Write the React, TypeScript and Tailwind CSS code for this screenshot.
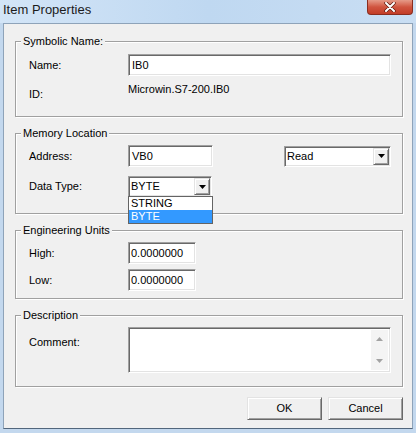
import React from 'react';

// classic win32 bevels
const sunken =
  'bg-white border border-[#a0a0a0] border-b-white border-r-white shadow-[inset_1px_1px_0_#696969,inset_-1px_-1px_0_#e3e3e3]';
const raised =
  'bg-[#f0f0f0] border border-[#e3e3e3] border-b-[#696969] border-r-[#696969] shadow-[inset_1px_1px_0_#ffffff,inset_-1px_-1px_0_#a0a0a0]';

function DownArrow({ color = '#000' }: { color?: string }) {
  return (
    <svg width="7" height="4" viewBox="0 0 7 4">
      <path d="M0 0h7L3.5 4z" fill={color} />
    </svg>
  );
}

function UpArrow({ color = '#000' }: { color?: string }) {
  return (
    <svg width="7" height="4" viewBox="0 0 7 4">
      <path d="M0 4h7L3.5 0z" fill={color} />
    </svg>
  );
}

function Combo({ value, width }: { value: string; width: string }) {
  return (
    <div className={`${sunken} ${width} h-[21px] flex items-center pl-[2px] pr-[1px]`}>
      <span className="flex-1 leading-[13px]">{value}</span>
      <div className={`${raised} w-[16px] h-[17px] flex items-center justify-center`}>
        <DownArrow />
      </div>
    </div>
  );
}

function GroupBox({
  title,
  height,
  className = '',
  children,
}: {
  title: string;
  height: string;
  className?: string;
  children: React.ReactNode;
}) {
  return (
    <fieldset
      className={`${height} ${className} border border-[#a0a0a0] shadow-[inset_1px_1px_0_#ffffff,1px_1px_0_#ffffff] pl-[13px]`}
    >
      <legend className="-ml-[8px] px-[2px] bg-[#f0f0f0] leading-[13px]">{title}</legend>
      {children}
    </fieldset>
  );
}

export default function App() {
  return (
    <div className="w-[416px] h-[433px] bg-[#c3d8ee] flex flex-col overflow-hidden text-[11px] text-black font-['Liberation_Sans',Arial,sans-serif]">
      {/* Title bar */}
      <div className="h-[23px] flex items-start justify-between pl-[3px] pr-[3px] bg-linear-to-r from-[#d3e5f7] via-[#bfd8f1] to-[#c9def3]">
        <span className="mt-[2px] text-[13px] leading-[16px] text-[#1b1b1b]">Item Properties</span>
        <div className="w-[46px] h-[15px] rounded-b-[4px] border border-t-0 border-[#8a2d1f] bg-linear-to-b from-[#e59a88] via-[#d0543f] to-[#c23d27] flex items-center justify-center">
          <svg width="12" height="10" viewBox="0 0 12 10">
            <path d="M2 1l8 8M10 1l-8 8" stroke="#5a1a10" strokeWidth="3.4" strokeLinecap="round" />
            <path d="M2 1l8 8M10 1l-8 8" stroke="#ffffff" strokeWidth="2" strokeLinecap="round" />
          </svg>
        </div>
      </div>

      {/* Client area */}
      <div className="mx-[3px] h-[406px] border border-[#8ea3b9] border-b-[#52667c] bg-[#f0f0f0] pt-[11px] pl-[11px] pr-[9px] flex flex-col">
        <GroupBox title="Symbolic Name:" height="h-[82px]">
          <div className="mt-[6px] flex items-center h-[22px]">
            <span className="w-[99px] leading-[13px]">Name:</span>
            <div className={`${sunken} w-[263px] h-[22px] flex items-center pl-[3px] leading-[13px]`}>IB0</div>
          </div>
          <div className="mt-[7px] flex items-start">
            <span className="w-[99px] mt-[5px] leading-[13px]">ID:</span>
            <span className="leading-[13px]">Microwin.S7-200.IB0</span>
          </div>
        </GroupBox>

        <GroupBox title="Memory Location" height="h-[87px]" className="mt-[10px]">
          <div className="mt-[5px] flex items-center h-[22px]">
            <span className="w-[99px] leading-[13px]">Address:</span>
            <div className={`${sunken} w-[85px] h-[22px] flex items-center pl-[3px] leading-[13px]`}>VB0</div>
            <div className="ml-[71px]">
              <Combo value="Read" width="w-[107px]" />
            </div>
          </div>
          <div className="mt-[9px] flex items-center">
            <span className="w-[99px] leading-[13px]">Data Type:</span>
            <div className="relative">
              <Combo value="BYTE" width="w-[84px]" />
              <div className="absolute z-10 left-0 top-[20px] w-[85px] border border-[#646464] bg-white">
                <div className="h-[13px] leading-[13px] pl-[2px]">STRING</div>
                <div className="h-[13px] leading-[13px] pl-[2px] bg-[#3399ff] text-white">BYTE</div>
              </div>
            </div>
          </div>
        </GroupBox>

        <GroupBox title="Engineering Units" height="h-[75px]" className="mt-[10px]">
          <div className="mt-[5px] flex items-center h-[22px]">
            <span className="w-[99px] leading-[13px]">High:</span>
            <div className={`${sunken} w-[68px] h-[22px] flex items-center pl-[2px] leading-[13px]`}>0.0000000</div>
          </div>
          <div className="mt-[5px] flex items-center h-[22px]">
            <span className="w-[99px] leading-[13px]">Low:</span>
            <div className={`${sunken} w-[68px] h-[22px] flex items-center pl-[2px] leading-[13px]`}>0.0000000</div>
          </div>
        </GroupBox>

        <GroupBox title="Description" height="h-[78px]" className="mt-[10px]">
          <div className="mt-[5px] flex items-start">
            <span className="w-[99px] mt-[9px] leading-[13px]">Comment:</span>
            <div className={`${sunken} w-[263px] h-[46px] flex p-[2px] pl-[2px]`}>
              <div className="flex-1" />
              <div className="w-[17px] bg-[#f4f4f4] flex flex-col items-center justify-between py-[7px]">
                <UpArrow color="#a3a3a3" />
                <DownArrow color="#a3a3a3" />
              </div>
            </div>
          </div>
        </GroupBox>

        <div className="mt-[10px] flex justify-end gap-[6px]">
          <button className={`${raised} w-[75px] h-[23px] leading-[13px]`}>OK</button>
          <button className={`${raised} w-[75px] h-[23px] leading-[13px]`}>Cancel</button>
        </div>
      </div>
    </div>
  );
}
